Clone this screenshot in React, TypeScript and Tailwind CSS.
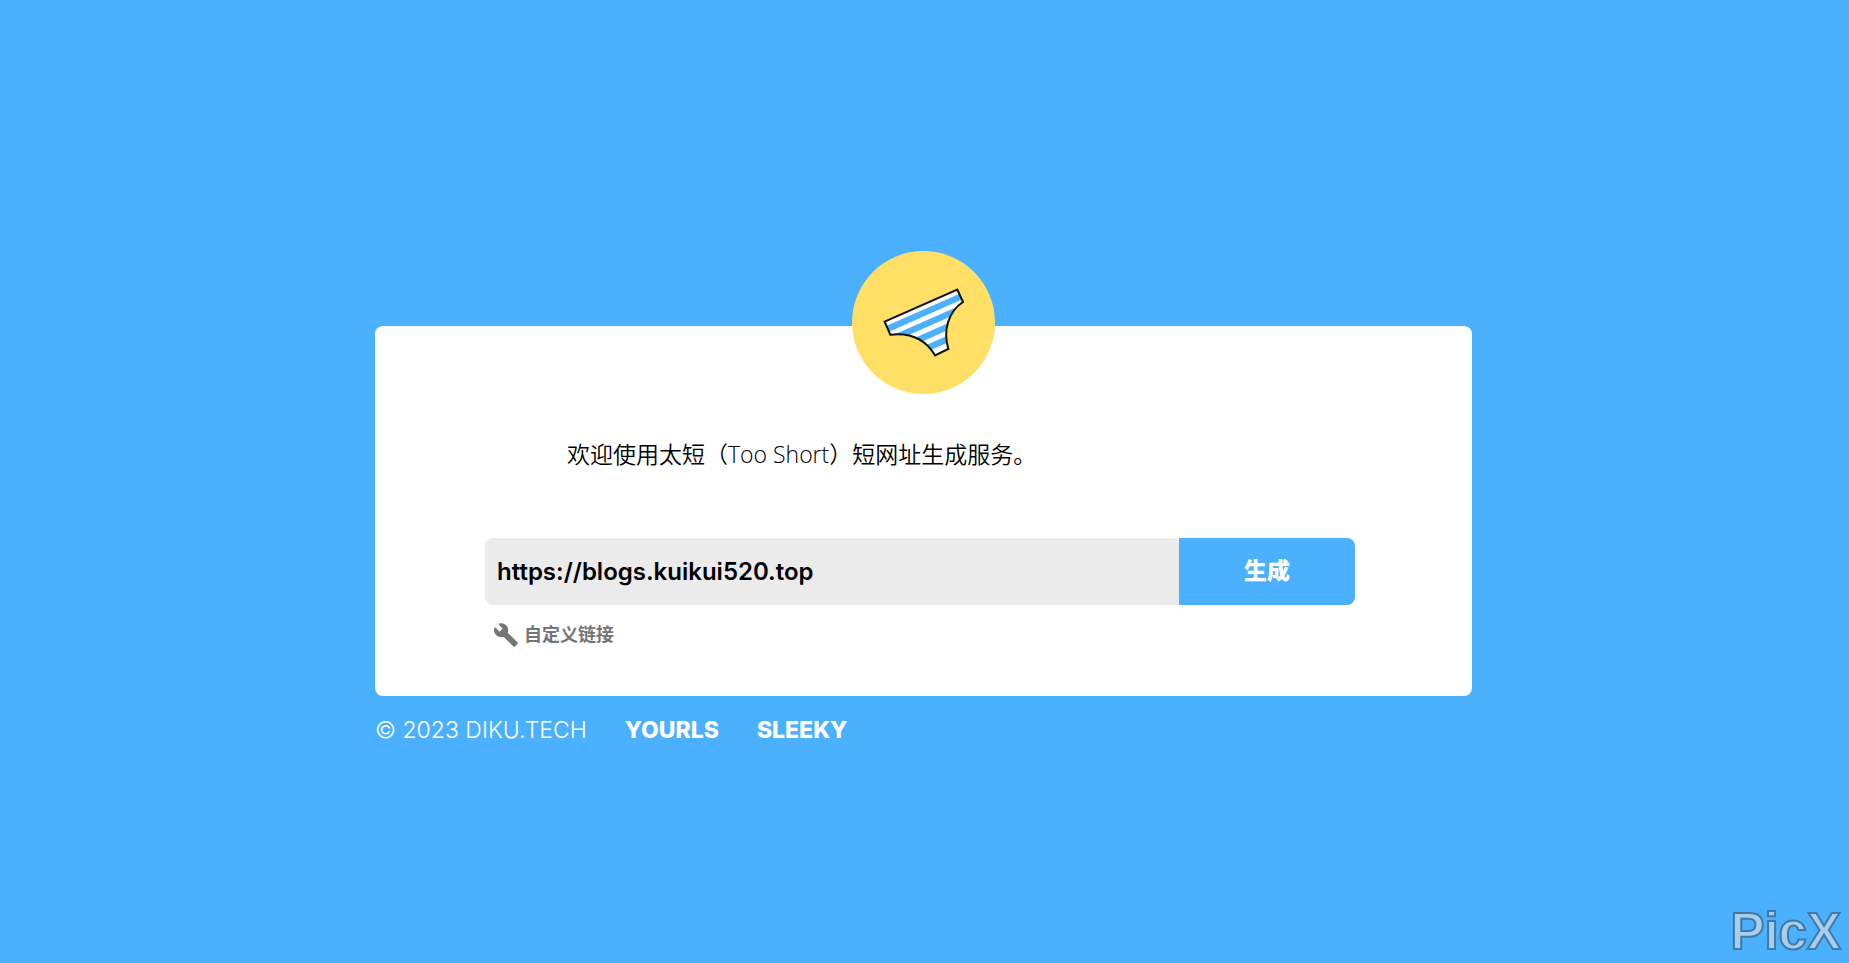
import { useState } from "react";

function Logo() {
  return (
    <svg viewBox="36 33 429 429" className="relative size-[143px]" role="img" aria-label="Too Short">
      <defs>
        <clipPath id="brief">
          <path d="M134 245 L352 149 L369 186 C326 214 308 270 325 327 L285 346 C258 300 215 277 151 284 Z" />
        </clipPath>
      </defs>
      <circle cx="250.500" cy="247.500" r="214.500" fill="#ffdf65" />
      <g clipPath="url(#brief)">
        <rect x="120" y="140" width="260" height="220" fill="#fff" />
        <g stroke="#4bb1ff" strokeWidth="19">
          <path d="M120 277 L380 162" />
          <path d="M120 313 L380 198" />
          <path d="M120 350 L380 235" />
          <path d="M120 387 L380 272" />
        </g>
      </g>
      <path
        d="M134 245 L352 149 L369 186 C326 214 308 270 325 327 L285 346 C258 300 215 277 151 284 Z"
        fill="none"
        stroke="#111"
        strokeWidth="6"
      />
    </svg>
  );
}

function WrenchIcon() {
  return (
    <svg viewBox="0 0 24 24" className="size-[26px]" fill="currentColor" aria-hidden="true">
      <path d="M22.7 19l-9.100-9.100c.9-2.300.4-5-1.500-6.900-2-2-5-2.400-7.400-1.300L9 6 6 9 1.600 4.700C.4 7.100.9 10.100 2.900 12.100c1.900 1.900 4.600 2.400 6.900 1.500l9.100 9.100c.4.4 1 .4 1.400 0l2.300-2.300c.5-.4.5-1.100.1-1.400z" />
    </svg>
  );
}

export default function App() {
  const [url, setUrl] = useState("https://blogs.kuikui520.top");

  return (
    <div className="flex min-h-screen flex-col bg-[#4bb1ff] pt-[251px] pr-[18px] pl-4 font-['Inter','Noto_Sans_CJK_SC',sans-serif]">
      <main className="mx-auto flex w-full max-w-[1097px] flex-col items-center">
        <Logo />
        <section className="-mt-[68px] w-full rounded-lg bg-white pt-[112px] pr-[117px] pb-[47px] pl-[110px]">
          <p className="px-[82px] font-['Open_Sans','Noto_Sans_CJK_SC',sans-serif] text-[23px] leading-[32px] font-[350] text-black">
            欢迎使用太短（Too Short）短网址生成服务。
          </p>
          <form className="mt-[68px] flex h-[67px]" onSubmit={(e) => e.preventDefault()}>
            <input
              type="text"
              aria-label="网址"
              value={url}
              onChange={(e) => setUrl(e.target.value)}
              className="min-w-0 flex-1 rounded-l-lg bg-[#ebebeb] px-3 text-[24px] font-semibold text-black outline-none"
            />
            <button type="submit" className="w-[176px] rounded-r-lg bg-[#4bb1ff] text-[23px] font-extrabold text-white">
              生成
            </button>
          </form>
          <button type="button" className="mt-4 flex items-center gap-[5px] pl-2 text-[18px] leading-[28px] font-bold text-[#757575]">
            <WrenchIcon />
            自定义链接
          </button>
        </section>
        <footer className="mt-[18px] flex w-full gap-[38px] text-[23px] leading-[32px] text-white">
          <span className="font-light">© 2023 DIKU.TECH</span>
          <a href="#yourls" className="font-extrabold">YOURLS</a>
          <a href="#sleeky" className="font-extrabold">SLEEKY</a>
        </footer>
      </main>
      <div className="pointer-events-none fixed right-2 bottom-[3px] font-['Liberation_Sans',sans-serif] text-[51px] leading-[56px] font-bold text-[#a9cdea] [-webkit-text-stroke:2px_#3f7ba6]">
        PicX
      </div>
    </div>
  );
}
